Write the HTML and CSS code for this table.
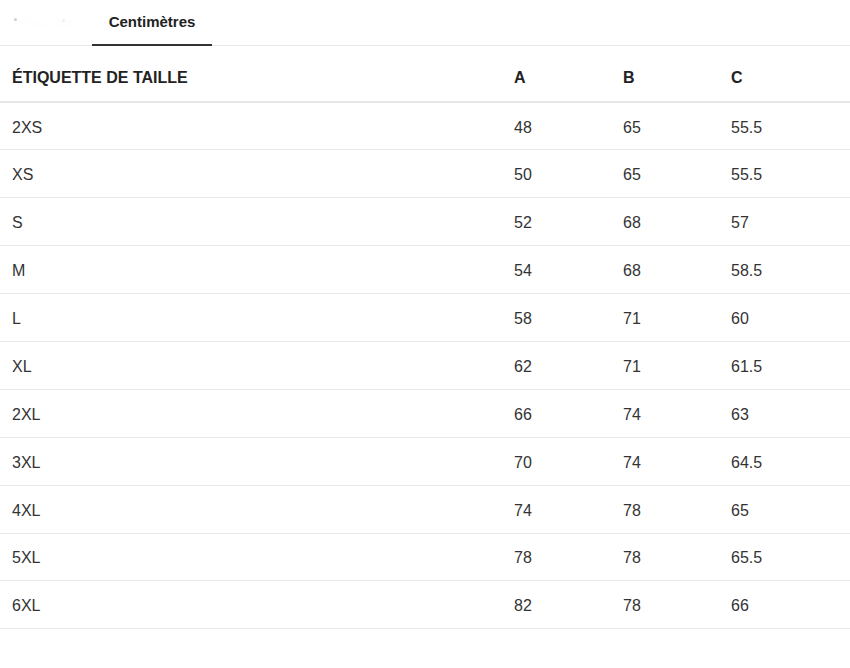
FILE: index.html
```html
<!DOCTYPE html>
<html lang="fr">
<head>
<meta charset="utf-8">
<title>Guide des tailles</title>
<link rel="stylesheet" href="styles.css">
</head>
<body>
<div class="tabs">
  <div class="tab tab-faded"><span class="blob"></span><span class="blob blob-2"></span>Pouces</div>
  <div class="tab tab-active">Centimètres</div>
</div>
<table class="sizes">
  <colgroup>
    <col class="c-label"><col class="c-a"><col class="c-b"><col class="c-c">
  </colgroup>
  <thead>
    <tr><th>Étiquette de taille</th><th>A</th><th>B</th><th>C</th></tr>
  </thead>
  <tbody>
    <tr><td>2XS</td><td>48</td><td>65</td><td>55.5</td></tr>
    <tr><td>XS</td><td>50</td><td>65</td><td>55.5</td></tr>
    <tr><td>S</td><td>52</td><td>68</td><td>57</td></tr>
    <tr><td>M</td><td>54</td><td>68</td><td>58.5</td></tr>
    <tr><td>L</td><td>58</td><td>71</td><td>60</td></tr>
    <tr><td>XL</td><td>62</td><td>71</td><td>61.5</td></tr>
    <tr><td>2XL</td><td>66</td><td>74</td><td>63</td></tr>
    <tr><td>3XL</td><td>70</td><td>74</td><td>64.5</td></tr>
    <tr><td>4XL</td><td>74</td><td>78</td><td>65</td></tr>
    <tr><td>5XL</td><td>78</td><td>78</td><td>65.5</td></tr>
    <tr><td>6XL</td><td>82</td><td>78</td><td>66</td></tr>
  </tbody>
</table>
</body>
</html>
```

FILE: styles.css
```css
html, body {
  margin: 0;
  padding: 0;
  background: #ffffff;
}
body {
  width: 850px;
  font-family: "Liberation Sans", Arial, sans-serif;
  color: #333333;
}
.tabs {
  display: flex;
  height: 45px;
  border-bottom: 1px solid #e8e8e8;
}
.tab {
  box-sizing: border-box;
  height: 46px;
  display: flex;
  align-items: center;
  justify-content: center;
  font-size: 15px;
  font-weight: bold;
  padding-bottom: 1px;
}
.tab-faded {
  width: 92px;
  color: #fefefe;
  position: relative;
}
.blob {
  position: absolute;
  left: 14px;
  top: 18px;
  width: 3px;
  height: 3px;
  border-radius: 50%;
  background: #cfcfcf;
}
.blob-2 {
  left: 62px;
  top: 19px;
  background: #f0f0f0;
}
.tab-active {
  width: 120px;
  color: #222222;
  border-bottom: 2px solid #333333;
}
.sizes {
  width: 850px;
  border-collapse: collapse;
  table-layout: fixed;
}
.c-label { width: 502px; }
.c-a { width: 109px; }
.c-b { width: 108px; }
.c-c { width: 131px; }
.sizes th {
  text-align: left;
  font-size: 16px;
  font-weight: bold;
  text-transform: uppercase;
  color: #222222;
  height: 56px;
  padding: 8px 0 0 12px;
  box-sizing: border-box;
  border-bottom: 2px solid #e6e6e6;
}
.sizes td {
  font-size: 16px;
  height: 47.9px;
  padding: 3px 0 0 12px;
  box-sizing: border-box;
  border-bottom: 1px solid #e8e8e8;
  color: #333333;
}
```
